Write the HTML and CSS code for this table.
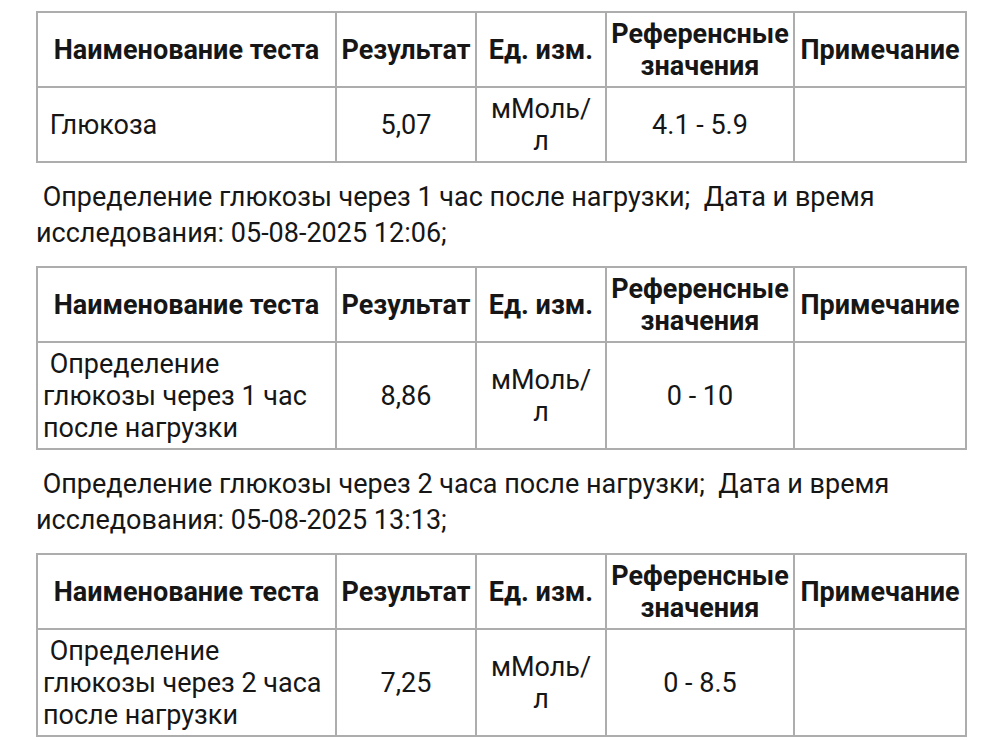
FILE: index.html
```html
<!DOCTYPE html>
<html lang="ru">
<head>
<meta charset="utf-8">
<title>Результаты</title>
<link rel="stylesheet" href="styles.css">
</head>
<body>
<div class="page">
  <table class="lab">
    <colgroup><col class="c1"><col class="c2"><col class="c3"><col class="c4"><col class="c5"></colgroup>
    <tr><th>Наименование теста</th><th>Результат</th><th>Ед. изм.</th><th>Референсные значения</th><th>Примечание</th></tr>
    <tr><td class="name">&nbsp;Глюкоза</td><td class="mid">5,07</td><td class="mid unit">мМоль/<wbr>л</td><td class="mid">4.1 - 5.9</td><td></td></tr>
  </table>
  <p class="info">&nbsp;Определение глюкозы через 1 час после нагрузки;&nbsp; Дата и время исследования: 05-08-2025 12:06;</p>
  <table class="lab">
    <colgroup><col class="c1"><col class="c2"><col class="c3"><col class="c4"><col class="c5"></colgroup>
    <tr><th>Наименование теста</th><th>Результат</th><th>Ед. изм.</th><th>Референсные значения</th><th>Примечание</th></tr>
    <tr><td class="name">&nbsp;Определение глюкозы через 1 час после нагрузки</td><td class="mid">8,86</td><td class="mid unit">мМоль/<wbr>л</td><td class="mid">0 - 10</td><td></td></tr>
  </table>
  <p class="info">&nbsp;Определение глюкозы через 2 часа после нагрузки;&nbsp; Дата и время исследования: 05-08-2025 13:13;</p>
  <table class="lab">
    <colgroup><col class="c1"><col class="c2"><col class="c3"><col class="c4"><col class="c5"></colgroup>
    <tr><th>Наименование теста</th><th>Результат</th><th>Ед. изм.</th><th>Референсные значения</th><th>Примечание</th></tr>
    <tr><td class="name">&nbsp;Определение глюкозы через 2 часа после нагрузки</td><td class="mid">7,25</td><td class="mid unit">мМоль/<wbr>л</td><td class="mid">0 - 8.5</td><td></td></tr>
  </table>
</div>
</body>
</html>
```
FILE: styles.css
```css
html, body {
  margin: 0;
  padding: 0;
  background: #ffffff;
}
.page {
  padding: 11px 36px 0 36px;
  font-family: Roboto, "Noto Sans", sans-serif;
  font-size: 27px;
  color: #161616;
}
.lab {
  border-collapse: collapse;
  table-layout: fixed;
  width: 929px;
}
.c1 { width: 299px; }
.c2 { width: 140px; }
.c3 { width: 130px; }
.c4 { width: 188px; }
.c5 { width: 172px; }
.lab th,
.lab td {
  border: 2px solid #adadad;
  padding: 5px 5px 4px;
  line-height: 32px;
  vertical-align: middle;
}
.lab th {
  font-weight: bold;
  text-align: center;
  padding: 5px 1px 4px;
}
.lab td.name {
  text-align: left;
}
.lab td.mid {
  text-align: center;
}
.lab td.unit {
  padding: 5px 12px 4px;
}
.info {
  margin: 16px 0 15px;
  line-height: 36px;
  padding-right: 20px;
}
```
